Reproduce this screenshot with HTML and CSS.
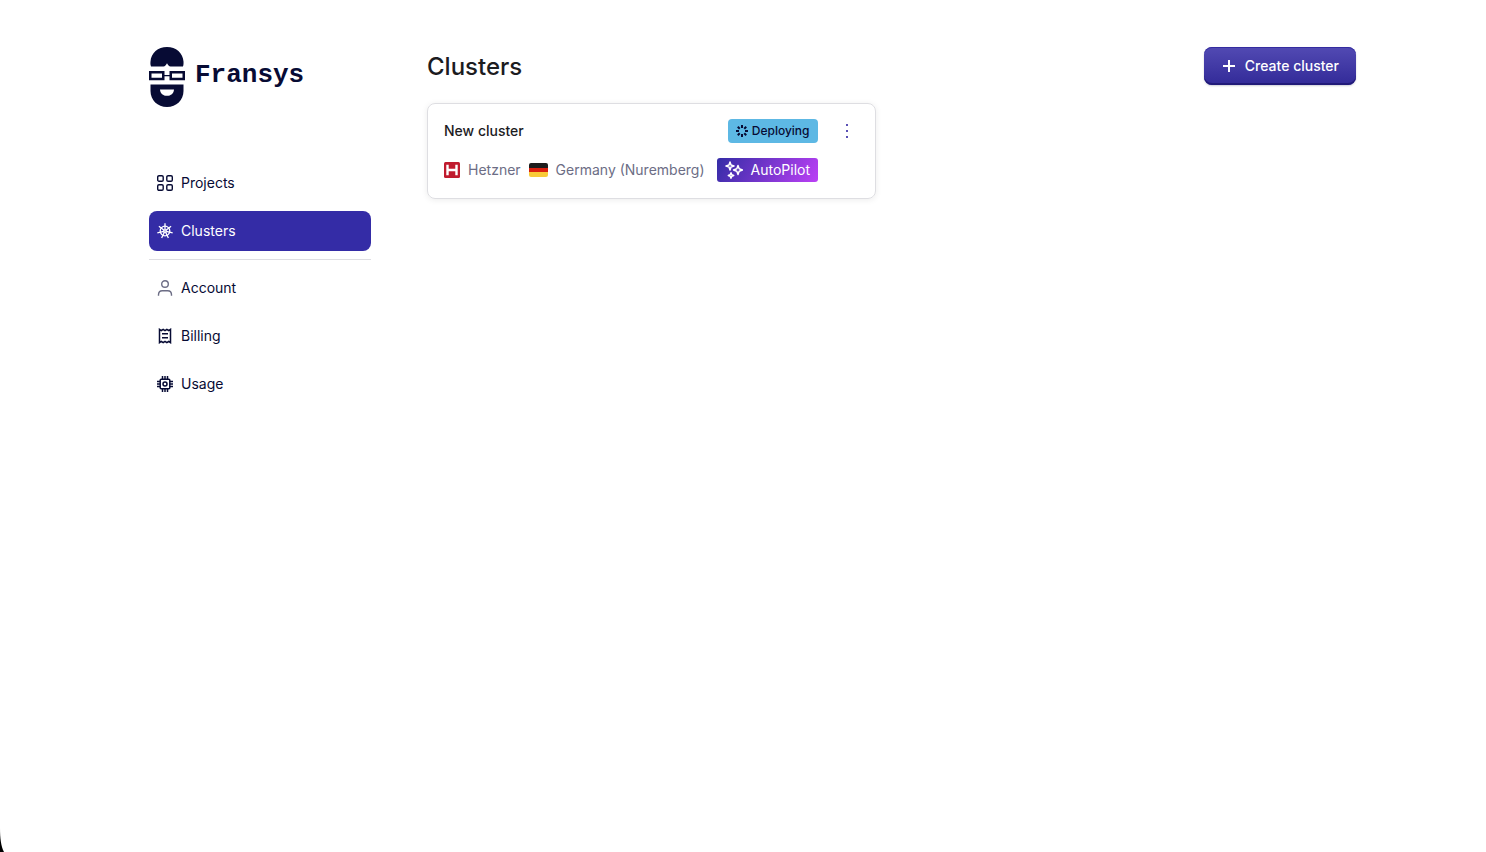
FILE: index.html
```html
<!DOCTYPE html>
<html lang="en">
<head>
  <meta charset="utf-8">
  <title>Clusters - Fransys</title>
  <link rel="stylesheet" href="styles.css">
</head>
<body>
  <div class="layout">
    <aside class="sidebar">
      <a href="#" class="logo">
        <svg width="36" height="60" viewBox="0 0 36 60" fill="#070b34">
          <path d="M2 19.500C1 17 1.500 15 1.500 14.500C2 6 9 0 18 0s16 6 16.500 14.500c0 .5.3 3-.5 5H21.500c-1.500 0-2.500-1.200-3.500-3.200c-1 2-2 3.200-3.500 3.200z"/>
          <path fill-rule="evenodd" d="M0 24h15.500v4h5v-4H36v9.200H20.500v-4h-5v4H0zM2.500 26.500v4.200H13v-4.200zM23 26.500v4.200h10.500v-4.200z"/>
          <path fill-rule="evenodd" d="M1.500 37.500h33V44c0 9-7 16-16.500 16S1.500 53 1.500 44zM11 42.500c.3 4 3 6.300 7 6.300s6.700-2.300 7-6.300z"/>
        </svg>
        <span>Fransys</span>
      </a>

      <nav class="menu">
        <a href="#" class="menu-item">
          <svg class="icon" viewBox="0 0 16 16" stroke-width="1.400">
            <rect x=".7" y=".7" width="5.500" height="5.500" rx="1.300"/>
            <rect x="9.800" y=".7" width="5.500" height="5.500" rx="1.300"/>
            <rect x=".7" y="9.800" width="5.500" height="5.500" rx="1.300"/>
            <rect x="9.800" y="9.800" width="5.500" height="5.500" rx="1.300"/>
          </svg>
          Projects
        </a>
        <a href="#" class="menu-item active">
          <svg class="icon" viewBox="0 0 16 16" stroke-width="1.300">
            <circle cx="8" cy="8" r="4.800"/>
            <circle cx="8" cy="8" r="1.200"/>
            <path d="M8 6.800V.3M8.940 7.250l5.150-4.100M9.170 8.270l6.500 1.500M8.520 9.080l2.850 5.920M7.480 9.080l-2.850 5.920M6.830 8.270L.33 9.770M7.060 7.250L1.910 3.150"/>
          </svg>
          Clusters
        </a>
        <hr>
        <a href="#" class="menu-item">
          <svg class="icon muted" viewBox="0 0 16 16" stroke-width="1.400">
            <circle cx="8" cy="4" r="3.300"/>
            <path d="M1.500 15.800v-1c0-2.400 1.600-4.100 3.800-4.100h5.400c2.200 0 3.800 1.700 3.800 4.100v1"/>
          </svg>
          Account
        </a>
        <a href="#" class="menu-item">
          <svg class="icon" viewBox="0 0 16 16" stroke-width="1.500">
            <path d="M2.500 1.300l1.800 1.200L6.200 1.300 8 2.500l1.800-1.200 1.900 1.200 1.800-1.200v13.400l-1.800-1.200-1.900 1.200L8 13.500l-1.800 1.200-1.900-1.200-1.800 1.200zM5 5.800h6M5 9.800h6"/>
          </svg>
          Billing
        </a>
        <a href="#" class="menu-item">
          <svg class="icon" viewBox="0 0 16 16" stroke-width="1.500">
            <rect x="3.200" y="3.200" width="9.600" height="9.600" rx="1"/>
            <circle cx="8" cy="8" r="2"/>
            <path d="M5.500 3V0M8 3V0M10.500 3V0M5.500 16v-3M8 16v-3M10.500 16v-3M3 5.500H0M3 8H0M3 10.500H0M16 5.500h-3M16 8h-3M16 10.500h-3"/>
          </svg>
          Usage
        </a>
      </nav>
    </aside>

    <main class="content">
      <header class="page-header">
        <h1>Clusters</h1>
        <button type="button" class="btn-create">
          <svg width="12" height="12" viewBox="0 0 12 12" stroke="#fff" stroke-width="2">
            <path d="M6 0v12M0 6h12"/>
          </svg>
          Create cluster
        </button>
      </header>

      <div class="clusters">
        <article class="card">
          <div class="card-row">
            <h2>New cluster</h2>
            <span class="status">
              <svg width="12" height="12" viewBox="0 0 12 12" stroke="#070b34" stroke-width="2">
                <path d="M6 0v3M6 9V12M0 6h3M9 6H12M1.760 1.760l2 2M8.240 8.240l2 2M1.760 10.240l2-2M8.240 3.760l2-2"/>
              </svg>
              Deploying
            </span>
            <button type="button" class="btn-more" aria-label="More actions">
              <svg width="2" height="14" viewBox="0 0 2 14" fill="#5a50b5">
                <path d="M0 0h2v2H0zM0 6h2v2H0zM0 12h2v2H0z"/>
              </svg>
            </button>
          </div>
          <div class="card-row details">
            <svg width="16" height="16" viewBox="0 0 16 16">
              <rect width="16" height="16" rx="1.500" fill="#c01b2e"/>
              <path d="M2.300 2.700h2.400v4h6.600v-4h2.400v10.600h-2.400v-4H4.700v4H2.300z" fill="#fff"/>
            </svg>
            <span>Hetzner</span>
            <span class="flag"></span>
            <span>Germany (Nuremberg)</span>
            <span class="autopilot">
              <svg width="18" height="18" viewBox="0 0 18 18" fill="none" stroke="#fff" stroke-width="1.500" stroke-linejoin="round">
                <path d="M5 1l1 3 3 1-3 1-1 3-1-3-3-1 3-1zM13 4.500l1.200 3.300 3.300 1.200-3.300 1.200L13 13.500l-1.200-3.300L8.500 9l3.300-1.200zM6 11.800l.8 1.900 1.900.8-1.900.8-.8 1.900-.8-1.900-1.900-.8 1.900-.8z"/>
              </svg>
              AutoPilot
            </span>
          </div>
        </article>
      </div>
    </main>
  </div>

  <svg class="corner" width="4" height="24" viewBox="0 0 4 24">
    <path d="M0 0c0 10 1 18 4 24H0z"/>
  </svg>
</body>
</html>
```
FILE: styles.css
```css
* {
  box-sizing: border-box;
}

body {
  margin: 0;
  font-family: Inter, sans-serif;
  font-size: 14px;
  line-height: 24px;
  color: #070b34;
  background: #fff;
}

a {
  color: inherit;
  text-decoration: none;
}

h1, h2 {
  margin: 0;
  color: #1c1c1f;
}

svg {
  display: block;
  flex-shrink: 0;
}

.layout {
  display: flex;
  gap: 56px;
  padding: 47px 130px 47px 149px;
}

.sidebar {
  flex: 0 0 222px;
}

.logo {
  display: flex;
  align-items: center;
  gap: 10px;
  margin-bottom: 56px;
  font-family: "Liberation Mono", monospace;
  font-size: 26px;
  font-weight: bold;
}

.logo span {
  padding-bottom: 4px;
}

.menu {
  display: flex;
  flex-direction: column;
  gap: 8px;
}

.menu hr {
  width: 100%;
  height: 1px;
  margin: 0;
  border: none;
  background: #dedee2;
}

.menu-item {
  display: flex;
  align-items: center;
  gap: 8px;
  height: 40px;
  padding: 0 8px;
  border-radius: 8px;
}

.menu-item.active {
  color: #fff;
  background: #342ca6;
}

.icon {
  width: 16px;
  height: 16px;
  fill: none;
  stroke: currentColor;
}

.icon.muted {
  color: #6c6d85;
}

.content {
  flex: 1;
}

.page-header {
  display: flex;
  align-items: center;
  justify-content: space-between;
  margin-bottom: 18px;
}

.page-header h1 {
  padding-top: 2px;
  font-size: 24px;
  font-weight: 500;
}

.btn-create {
  display: flex;
  align-items: center;
  gap: 10px;
  height: 38px;
  padding: 0 17px 0 19px;
  border: none;
  border-radius: 8px;
  font-family: inherit;
  font-size: 14px;
  font-weight: 500;
  line-height: 24px;
  color: #fff;
  background: linear-gradient(#524ab3, #322a98);
  box-shadow: inset 0 1px #342ca0, inset 0 -2px #211a78, 0 1px 2px rgba(7, 11, 52, 0.2);
  cursor: pointer;
}

.clusters {
  display: grid;
  grid-template-columns: 1fr 1fr;
  gap: 32px;
}

.card {
  display: flex;
  flex-direction: column;
  gap: 15px;
  padding: 15px 16px 16px;
  border: 1px solid #dedee2;
  border-radius: 8px;
  box-shadow: 0 1px 6px rgba(0, 0, 0, 0.08);
}

.card-row {
  display: flex;
  align-items: center;
  height: 24px;
}

.card h2 {
  flex: 1;
  font-size: 14px;
  font-weight: 500;
}

.status {
  display: flex;
  align-items: center;
  gap: 4px;
  padding: 0 8px;
  border-radius: 4px;
  font-size: 12px;
  font-weight: 500;
  background: #5db8e4;
}

.btn-more {
  display: flex;
  align-items: center;
  justify-content: center;
  width: 24px;
  height: 24px;
  margin-left: 17px;
  padding: 0;
  border: none;
  background: none;
  cursor: pointer;
}

.details {
  gap: 8px;
  color: #6c6d85;
  white-space: nowrap;
}

/* German flag */
.flag {
  width: 19px;
  height: 14px;
  border-radius: 2px;
  background: linear-gradient(#1c1c1c 0 5px, #d9200f 5px 9px, #f9cb38 9px);
}

.autopilot {
  display: flex;
  align-items: center;
  gap: 8px;
  margin-left: 4px;
  padding: 0 8px;
  border-radius: 3px;
  color: #fff;
  background: linear-gradient(120deg, #342ca6, #bb40f5);
}

.corner {
  position: fixed;
  left: 0;
  bottom: 0;
}
```
